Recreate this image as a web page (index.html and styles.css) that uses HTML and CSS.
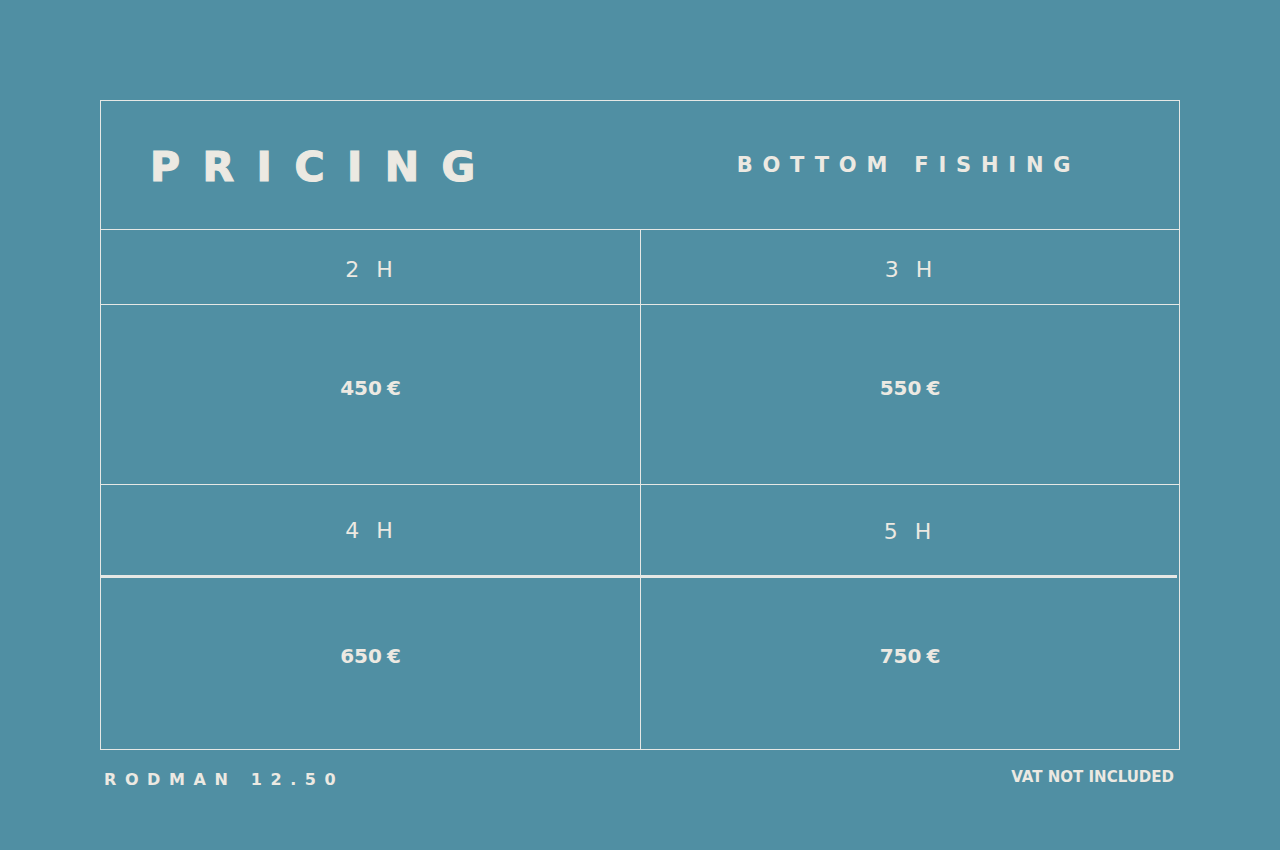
FILE: index.html
```html
<!DOCTYPE html>
<html lang="en">
<head>
<meta charset="utf-8">
<title>Pricing</title>
<link rel="stylesheet" href="styles.css">
</head>
<body>
<main class="page">
  <section class="card">
    <header class="head">
      <h1 class="title">PRICING</h1>
      <h2 class="subtitle">BOTTOM FISHING</h2>
    </header>
    <div class="grid">
      <div class="cell dur left">2 H</div>
      <div class="cell dur">3 H</div>
      <div class="cell price left">450 €</div>
      <div class="cell price">550 €</div>
      <div class="cell dur thick left">4 H</div>
      <div class="cell dur thick right-thick">5 H</div>
      <div class="cell price last left">650 €</div>
      <div class="cell price last">750 €</div>
    </div>
  </section>
  <footer class="foot">
    <span class="boat">RODMAN 12.50</span>
    <span class="vat">VAT NOT INCLUDED</span>
  </footer>
</main>
</body>
</html>
```

FILE: styles.css
```css
* { box-sizing: border-box; }

html, body {
  margin: 0;
  padding: 0;
  background: #508fa3;
}

body {
  font-family: "DejaVu Sans", "Liberation Sans", sans-serif;
  color: #ece9e2;
}

.page {
  width: 1080px;
  margin: 100px 0 0 100px;
}

.card {
  border: 1px solid #e6e8e5;
}

.head {
  height: 129px;
  border-bottom: 1px solid #e6e8e5;
  display: grid;
  grid-template-columns: 539px 1fr;
  align-items: center;
}

.title {
  margin: 0 0 0 49px;
  font-size: 41px;
  font-weight: 700;
  letter-spacing: 22.5px;
  line-height: 1;
  padding-top: 4px;
  -webkit-text-stroke: 1.2px #ece9e2;
}

.subtitle {
  margin: 0;
  text-align: center;
  font-size: 21px;
  font-weight: 700;
  letter-spacing: 9.8px;
  padding-right: 2px;
  line-height: 1;
}

.grid {
  display: grid;
  grid-template-columns: 540px 1fr;
  grid-template-rows: 75px 180px 93px 171px;
}

.cell {
  display: flex;
  align-items: center;
  justify-content: center;
  border-bottom: 1px solid #e6e8e5;
  line-height: 1;
}

.cell.left {
  border-right: 1px solid #e6e8e5;
}

.dur {
  font-size: 22px;
  font-weight: 400;
  letter-spacing: 5px;
  padding-left: 2px;
  padding-top: 6px;
}

.price {
  font-size: 20px;
  font-weight: 700;
  word-spacing: -2px;
  padding-bottom: 14px;
}

.dur.thick {
  border-bottom: 3px solid #e6e8e5;
  padding-top: 1px;
}

.dur.right-thick {
  margin-right: 2px;
  padding-top: 4px;
}

.price.last {
  border-bottom: none;
  padding-bottom: 16px;
}

.foot {
  display: flex;
  justify-content: space-between;
  align-items: flex-start;
  padding: 20px 6px 0 4px;
}

.boat {
  font-size: 16px;
  font-weight: 700;
  letter-spacing: 8.6px;
  line-height: 1;
  padding-top: 2px;
}

.vat {
  font-size: 15px;
  font-weight: 700;
  line-height: 1;
}
```
